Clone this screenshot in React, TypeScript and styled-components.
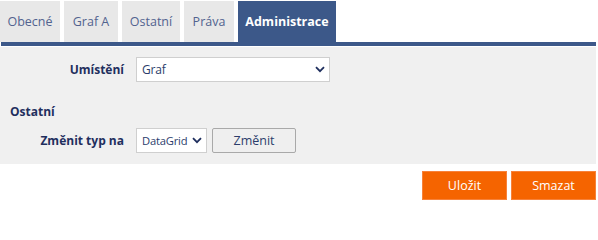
import React from "react";
import styled, { createGlobalStyle } from "styled-components";

const Global = createGlobalStyle`
  html, body { margin: 0; padding: 0; background: #ffffff; }
  body { font-family: "Open Sans", "Noto Sans", Arial, sans-serif; font-size: 12px; }
`;

const Page = styled.div`
  width: 596px;
  display: flex;
  flex-direction: column;
`;

const TabBar = styled.div`
  display: flex;
  gap: 4px;
  padding-top: 1px;
  height: 41px;
`;

const Tab = styled.div<{ $active?: boolean; $w: number }>`
  width: ${(p) => p.$w}px;
  display: flex;
  align-items: center;
  justify-content: center;
  background: ${(p) => (p.$active ? "#3c5889" : "#e8e8e8")};
  color: ${(p) => (p.$active ? "#ffffff" : "#52638f")};
  font-weight: ${(p) => (p.$active ? 700 : 400)};
  font-size: 12.5px;
`;

const TabLine = styled.div`
  height: 4px;
  margin-left: 1px;
  background: #3c5889;
`;

const Panel = styled.div`
  margin-top: 1px;
  background: #f0f0f0;
  padding: 10px 0 11px 0;
  display: flex;
  flex-direction: column;
`;

const Row = styled.div<{ $top?: number }>`
  display: grid;
  grid-template-columns: 124px auto;
  column-gap: 12px;
  align-items: center;
  margin-top: ${(p) => p.$top ?? 0}px;
`;

const Label = styled.div`
  text-align: right;
  font-weight: 700;
  color: #1f2f5e;
  font-size: 12px;
`;

const Section = styled.div`
  padding: 0 0 0 10px;
  margin-top: 22px;
  height: 15px;
  line-height: 15px;
  font-weight: 700;
  color: #1f2f5e;
  font-size: 12px;
`;

const Controls = styled.div`
  display: flex;
  gap: 5px;
  align-items: center;
`;

const SelectWrap = styled.div<{ $w: number }>`
  position: relative;
  width: ${(p) => p.$w}px;
  height: 25px;
`;

const Select = styled.select<{ $fs: number }>`
  appearance: none;
  -webkit-appearance: none;
  box-sizing: border-box;
  width: 100%;
  height: 100%;
  margin: 0;
  border: 1px solid #cfcfcf;
  border-radius: 0;
  background: #ffffff;
  color: #2b3d6b;
  font-family: "Open Sans", "Noto Sans", Arial, sans-serif;
  font-size: ${(p) => p.$fs}px;
  letter-spacing: -0.2px;
  padding: 0 0 0 5px;
  outline: none;
`;

const Chevron = styled.svg`
  position: absolute;
  right: 5px;
  top: 9px;
  width: 10px;
  height: 7px;
  pointer-events: none;
`;

const GrayButton = styled.button`
  box-sizing: border-box;
  width: 84px;
  height: 25px;
  margin: 0;
  border: 1px solid #a9a9a9;
  border-radius: 2px;
  background: #efefef;
  color: #2b3d6b;
  font-family: "Open Sans", "Noto Sans", Arial, sans-serif;
  font-size: 12.5px;
  padding: 0;
`;

const Footer = styled.div`
  display: flex;
  justify-content: flex-end;
  gap: 4px;
  margin-top: 7px;
`;

const OrangeButton = styled.button`
  box-sizing: border-box;
  width: 85px;
  height: 29px;
  margin: 0;
  border: 1px solid #f7823a;
  background: #f56400;
  color: #ffffff;
  font-family: "Open Sans", "Noto Sans", Arial, sans-serif;
  font-size: 12.5px;
  padding: 0;
`;

const ChevronIcon = () => (
  <Chevron viewBox="0 0 10 7">
    <path d="M1 1.2 L5 5.2 L9 1.2" fill="none" stroke="#1f2f5e" strokeWidth="1.8" />
  </Chevron>
);

const DropDown = ({ w, value, fs = 12 }: { w: number; value: string; fs?: number }) => (
  <SelectWrap $w={w}>
    <Select $fs={fs} defaultValue={value}>
      <option>{value}</option>
    </Select>
    <ChevronIcon />
  </SelectWrap>
);

const tabs = [
  { t: "Obecné", w: 60 },
  { t: "Graf A", w: 54 },
  { t: "Ostatní", w: 58 },
  { t: "Práva", w: 50 },
  { t: "Administrace", w: 98, active: true },
];

export default function App() {
  return (
    <>
      <Global />
      <Page>
        <TabBar>
          {tabs.map((x) => (
            <Tab key={x.t} $w={x.w} $active={x.active}>
              {x.t}
            </Tab>
          ))}
        </TabBar>
        <TabLine />
        <Panel>
          <Row>
            <Label>Umístění</Label>
            <DropDown w={194} value="Graf" />
          </Row>
          <Section>Ostatní</Section>
          <Row $top={9}>
            <Label>Změnit typ na</Label>
            <Controls>
              <DropDown w={71} value="DataGrid" fs={11.2} />
              <GrayButton>Změnit</GrayButton>
            </Controls>
          </Row>
        </Panel>
        <Footer>
          <OrangeButton>Uložit</OrangeButton>
          <OrangeButton>Smazat</OrangeButton>
        </Footer>
      </Page>
    </>
  );
}
